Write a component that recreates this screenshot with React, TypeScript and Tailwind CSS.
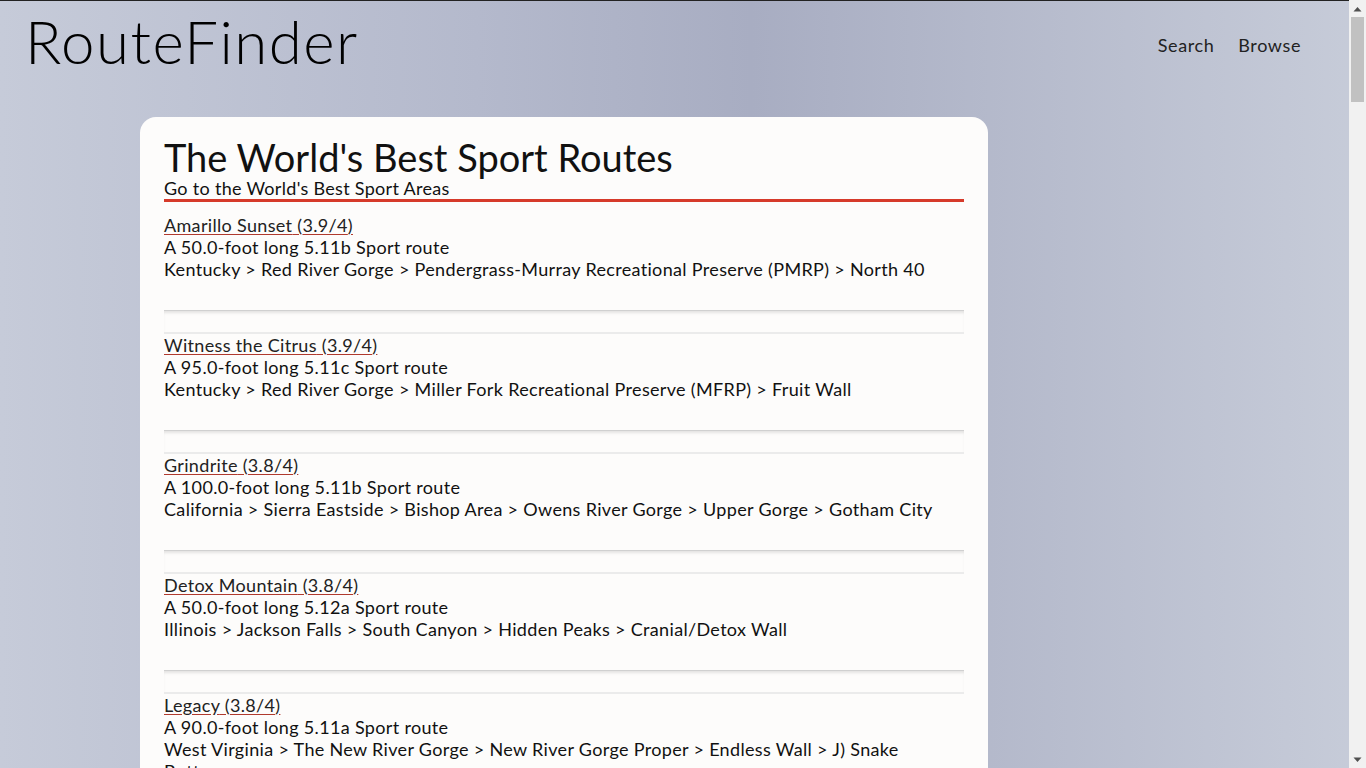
const routes = [
  {
    name: "Amarillo Sunset",
    rating: "3.9/4",
    desc: "A 50.0-foot long 5.11b Sport route",
    path: "Kentucky > Red River Gorge > Pendergrass-Murray Recreational Preserve (PMRP) > North 40",
  },
  {
    name: "Witness the Citrus",
    rating: "3.9/4",
    desc: "A 95.0-foot long 5.11c Sport route",
    path: "Kentucky > Red River Gorge > Miller Fork Recreational Preserve (MFRP) > Fruit Wall",
  },
  {
    name: "Grindrite",
    rating: "3.8/4",
    desc: "A 100.0-foot long 5.11b Sport route",
    path: "California > Sierra Eastside > Bishop Area > Owens River Gorge > Upper Gorge > Gotham City",
  },
  {
    name: "Detox Mountain",
    rating: "3.8/4",
    desc: "A 50.0-foot long 5.12a Sport route",
    path: "Illinois > Jackson Falls > South Canyon > Hidden Peaks > Cranial/Detox Wall",
  },
  {
    name: "Legacy",
    rating: "3.8/4",
    desc: "A 90.0-foot long 5.11a Sport route",
    path: "West Virginia > The New River Gorge > New River Gorge Proper > Endless Wall > J) Snake Buttress",
  },
];

// fake browser scrollbar, the page in the shot is a long list
function Scrollbar() {
  return (
    <div className="fixed right-0 top-0 flex h-screen w-[17px] flex-col bg-[#f1f1f1]">
      <div className="flex h-[17px] items-center justify-center">
        <svg width="9" height="6" viewBox="0 0 9 6">
          <path d="M0.5 5.5 L4.5 1 L8.5 5.5 Z" fill="#505050" />
        </svg>
      </div>
      <div className="mx-[2px] h-[85px] bg-[#c1c1c1]" />
      <div className="flex-1" />
      <div className="flex h-[17px] items-center justify-center">
        <svg width="9" height="6" viewBox="0 0 9 6">
          <path d="M0.5 0.5 L4.5 5 L8.5 0.5 Z" fill="#505050" />
        </svg>
      </div>
    </div>
  );
}

export default function App() {
  return (
    <div
      className="min-h-screen border-t border-[#222] bg-[linear-gradient(90deg,#c6cbd9_0%,#b4b9cc_35%,#a8adc2_55%,#c7ccd9_100%)] pr-[17px] text-[#111]"
      style={{ fontFamily: "Lato, 'Open Sans', sans-serif" }}
    >
      <header className="flex items-start justify-between pl-[25px] pr-[48px]">
        <a href="#" className="-mt-[3px] text-[60px] font-light leading-[86px] tracking-[1.5px] text-black">
          RouteFinder
        </a>
        <nav className="mt-[31px] flex gap-[24px] text-[18px] tracking-[0.6px] text-[#222]">
          <a href="#">Search</a>
          <a href="#">Browse</a>
        </nav>
      </header>

      <main className="ml-[140px] mt-[33px] min-h-[6400px] w-[848px] rounded-[16px] bg-[#fdfcfb] px-[24px] pt-[19px]">
        <h1 className="text-[38px] font-normal leading-[42px]">The World's Best Sport Routes</h1>
        <a href="#" className="block text-[18px] leading-[20px] tracking-[0.3px]">
          Go to the World's Best Sport Areas
        </a>
        <div className="mt-[1px] h-[3px] bg-[#d63a2a]" />

        <ul className="mt-[12px] tracking-[0.33px]">
          {routes.map((r, i) => (
            <li key={i}>
              {i > 0 && (
                <div className="h-[24px] border-b-2 border-t border-b-[#ebebeb] border-t-[#d0d0d0] shadow-[inset_0_3px_3px_-1px_rgba(0,0,0,0.1)]" />
              )}
              <div className="pb-[30px] text-[18px] leading-[22px]">
                <a href="#" className="text-[#222] underline decoration-[#b03a2e] underline-offset-[2px]">
                  {r.name} ({r.rating})
                </a>
                <p>{r.desc}</p>
                <p>{r.path}</p>
              </div>
            </li>
          ))}
        </ul>
      </main>
      <Scrollbar />
    </div>
  );
}
